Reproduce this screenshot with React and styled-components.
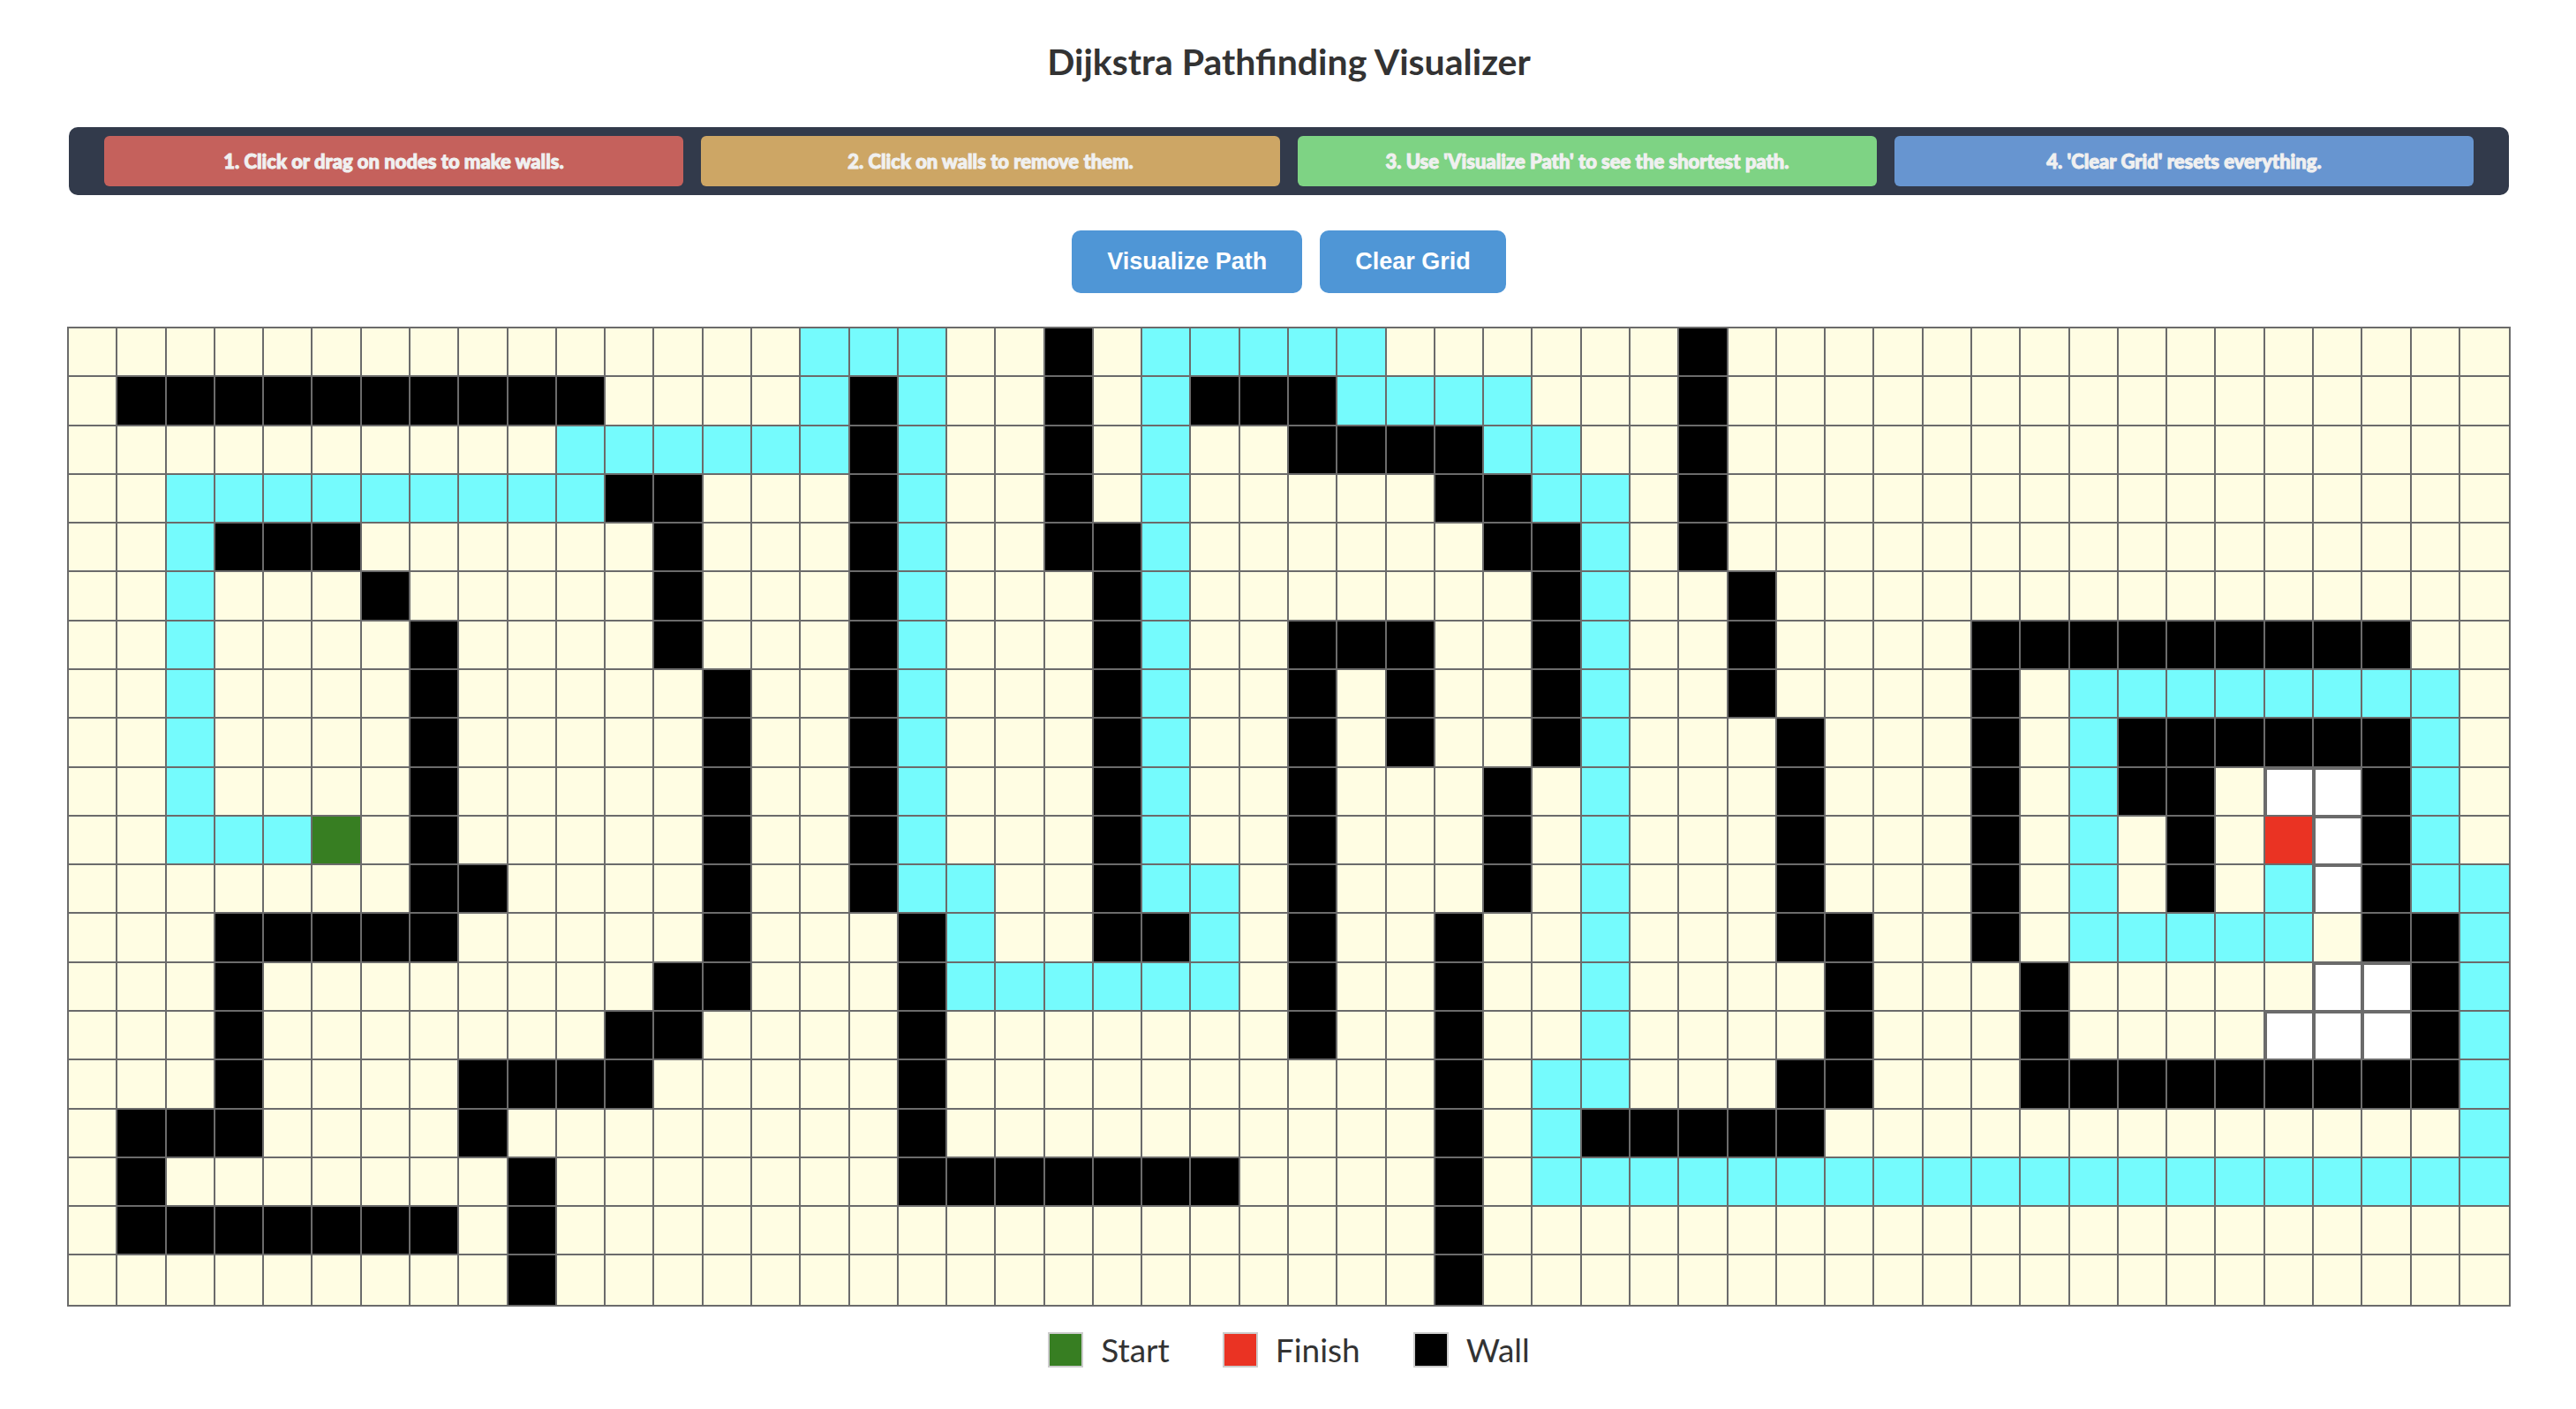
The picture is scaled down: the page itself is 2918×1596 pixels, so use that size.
import React, { useState } from "react";
import styled, { createGlobalStyle } from "styled-components";

const COLUMNS = 50;

// One entry per grid row: W = wall, P = shortest path, S = start,
// F = finish, O = open node that has not been visited.
const MAZE = [
  "P15-17 W20 P22-26 W33",
  "W1-10 P15 W16 P17 W20 P22 W23-25 P26-29 W33",
  "P10-15 W16 P17 W20 P22 W25-28 P29-30 W33",
  "P2-10 W11-12 W16 P17 W20 P22 W28-29 P30-31 W33",
  "P2 W3-5 W12 W16 P17 W20-21 P22 W29-30 P31 W33",
  "P2 W6 W12 W16 P17 W21 P22 W30 P31 W34",
  "P2 W7 W12 W16 P17 W21 P22 W25-27 W30 P31 W34 W39-47",
  "P2 W7 W13 W16 P17 W21 P22 W25 W27 W30 P31 W34 W39 P41-48",
  "P2 W7 W13 W16 P17 W21 P22 W25 W27 W30 P31 W35 W39 P41 W42-47 P48",
  "P2 W7 W13 W16 P17 W21 P22 W25 W29 P31 W35 W39 P41 W42-43 O45-46 W47 P48",
  "P2-4 S5 W7 W13 W16 P17 W21 P22 W25 W29 P31 W35 W39 P41 W43 F45 O46 W47 P48",
  "W7-8 W13 W16 P17-18 W21 P22-23 W25 W29 P31 W35 W39 P41 W43 P45 O46 W47 P48-49",
  "W3-7 W13 W17 P18 W21-22 P23 W25 W28 P31 W35-36 W39 P41-45 W47-48 P49",
  "W3 W12-13 W17 P18-23 W25 W28 P31 W36 W40 O46-47 W48 P49",
  "W3 W11-12 W17 W25 W28 P31 W36 W40 O45-47 W48 P49",
  "W3 W8-11 W17 W28 P30-31 W35-36 W40-48 P49",
  "W1-3 W8 W17 W28 P30 W31-35 P49",
  "W1 W9 W17-23 W28 P30-49",
  "W1-7 W9 W28",
  "W9 W28",
];

const KINDS = { W: "wall", P: "path", S: "start", F: "finish", O: "open" };

const NODE_COLORS = {
  visited: "#fffde3",
  wall: "#000000",
  path: "#75fbfd",
  start: "#377e22",
  finish: "#ea3323",
  open: "transparent",
};

const STEPS = [
  { color: "#c5615c", text: "1. Click or drag on nodes to make walls." },
  { color: "#cda665", text: "2. Click on walls to remove them." },
  { color: "#7ed384", text: "3. Use 'Visualize Path' to see the shortest path." },
  { color: "#6795d0", text: "4. 'Clear Grid' resets everything." },
];

const LEGEND = [
  { kind: "start", label: "Start" },
  { kind: "finish", label: "Finish" },
  { kind: "wall", label: "Wall" },
];

function buildNodes() {
  return MAZE.flatMap((row) => {
    const cells = Array(COLUMNS).fill("visited");
    row.split(" ").forEach((run) => {
      const [from, to = from] = run.slice(1).split("-").map(Number);
      cells.fill(KINDS[run[0]], from, to + 1);
    });
    return cells;
  });
}

const GlobalStyle = createGlobalStyle`
  *, *::before, *::after { box-sizing: border-box; }
  body {
    margin: 0;
    background: #ffffff;
    color: #333333;
    font-family: Lato, "Liberation Sans", sans-serif;
  }
`;

const Page = styled.main`
  display: flex;
  flex-direction: column;
  padding: 46px 76px 40px 78px;
`;

const Title = styled.h1`
  margin: 0 0 50px;
  font-size: 41px;
  line-height: 48px;
  font-weight: 700;
  text-align: center;
`;

const Steps = styled.ol`
  display: flex;
  gap: 20px;
  margin: 0 0 40px;
  padding: 10px 40px;
  list-style: none;
  background: #323a4b;
  border-radius: 10px;
`;

const Step = styled.li`
  flex: 1 1 0;
  padding: 15px 20px;
  border-radius: 6px;
  background: ${({ $color }) => $color};
  color: #f0f0f0;
  font-size: 22px;
  line-height: 27px;
  font-weight: 900;
  -webkit-text-stroke: 1px #f0f0f0;
  text-align: center;
`;

const Toolbar = styled.div`
  display: flex;
  justify-content: center;
  gap: 20px;
  margin-bottom: 40px;
`;

const Button = styled.button`
  padding: 20px 40px;
  border: 0;
  border-radius: 10px;
  background: #4f96d6;
  color: #ffffff;
  font-family: "Liberation Sans", Arial, sans-serif;
  font-size: 27px;
  line-height: 31px;
  font-weight: 700;
  cursor: pointer;
`;

const Grid = styled.div`
  display: grid;
  grid-template-columns: repeat(${COLUMNS}, 1fr);
`;

const Node = styled.div`
  aspect-ratio: 1;
  outline: 2px solid #6b6b6b;
  background: ${({ $kind }) => NODE_COLORS[$kind]};
`;

const Legend = styled.ul`
  display: flex;
  justify-content: center;
  gap: 60px;
  margin: 29px 0 0;
  padding: 0;
  list-style: none;
`;

const LegendItem = styled.li`
  display: flex;
  align-items: center;
  gap: 20px;
  font-size: 37px;
  line-height: 44px;
`;

const Swatch = styled.span`
  width: 40px;
  height: 40px;
  border: 2px solid #cccccc;
  background: ${({ $kind }) => NODE_COLORS[$kind]};
`;

export default function App() {
  const [nodes, setNodes] = useState(buildNodes);

  const toggleWall = (index) =>
    setNodes((current) =>
      current.map((kind, i) => {
        if (i !== index || kind === "start" || kind === "finish") return kind;
        return kind === "wall" ? "open" : "wall";
      })
    );

  const clearGrid = () =>
    setNodes((current) =>
      current.map((kind) => (kind === "start" || kind === "finish" ? kind : "open"))
    );

  return (
    <>
      <GlobalStyle />
      <Page>
        <Title>Dijkstra Pathfinding Visualizer</Title>
        <Steps>
          {STEPS.map(({ color, text }) => (
            <Step key={text} $color={color}>
              {text}
            </Step>
          ))}
        </Steps>
        <Toolbar>
          <Button type="button" onClick={() => setNodes(buildNodes())}>
            Visualize Path
          </Button>
          <Button type="button" onClick={clearGrid}>
            Clear Grid
          </Button>
        </Toolbar>
        <Grid>
          {nodes.map((kind, index) => (
            <Node
              key={index}
              $kind={kind}
              onMouseDown={() => toggleWall(index)}
              onMouseEnter={(event) => event.buttons === 1 && toggleWall(index)}
            />
          ))}
        </Grid>
        <Legend>
          {LEGEND.map(({ kind, label }) => (
            <LegendItem key={kind}>
              <Swatch $kind={kind} />
              {label}
            </LegendItem>
          ))}
        </Legend>
      </Page>
    </>
  );
}
